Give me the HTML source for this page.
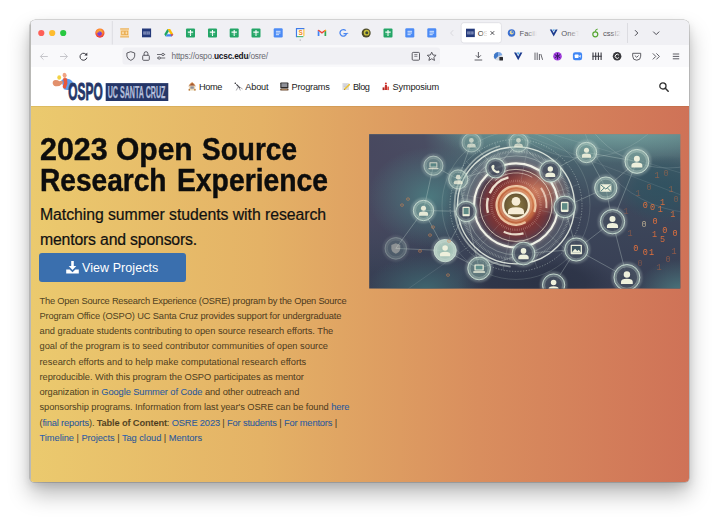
<!DOCTYPE html>
<html><head><meta charset="utf-8"><title>OSRE</title>
<style>
html,body{margin:0;padding:0;background:#fff;}
body{width:720px;height:523px;position:relative;overflow:hidden;font-family:"Liberation Sans",sans-serif;}
.abs,#o *{position:absolute;}
#win{position:absolute;left:30px;top:20px;width:659.4px;height:462.4px;border-radius:5.5px 5.5px 4px 4px;background:#f9f9fb;
 box-shadow:0 0 0 0.5px rgba(0,0,0,.28),0 12px 22px rgba(0,0,0,.28),0 4px 8px rgba(0,0,0,.10);overflow:hidden;}
#o{position:absolute;left:-30px;top:-20px;width:720px;height:523px;}
#tabbar{left:30px;top:20px;width:660px;height:25px;background:#f0f0f4;}
#navbar{left:30px;top:45px;width:660px;height:22px;background:#f9f9fb;border-bottom:1px solid #e0e0e3;}
#hdr{left:30px;top:67px;width:660px;height:39px;background:#fff;}
#hero{left:30px;top:106px;width:660px;height:377px;background:linear-gradient(90deg,#ebca6e 0%,#e4b266 35%,#d98e5e 68%,#cf7257 100%);}
.tl{top:30px;width:6px;height:6px;border-radius:50%;}
h1{margin:0;left:40px;font-size:31px;line-height:32px;font-weight:bold;color:#0d0d0d;white-space:nowrap;transform-origin:0 0;-webkit-text-stroke:0.45px #0d0d0d;}
.sub{-webkit-text-stroke:0.22px #111;left:40px;font-size:15.8px;line-height:18px;color:#111;white-space:nowrap;}
.btn{left:39px;top:253px;width:147px;height:29px;border-radius:3px;background:#3a6fae;color:#fff;font-size:12.5px;}
.pl{-webkit-text-stroke:0.12px rgba(28,22,10,.6);left:39.5px;font-size:9.3px;line-height:15px;color:rgba(28,22,10,.74);white-space:nowrap;}
#o .pl a,#o .pl b{position:static;}
.pl a{color:#2b62b0;text-decoration:none;}
.nav{top:81.8px;font-size:9.2px;line-height:11px;color:#222;white-space:nowrap;}
</style></head>
<body>
<div id="win"><div id="o">
 <div id="tabbar"></div>
 <div id="navbar"></div>

 <svg id="chrome" style="left:0;top:0" width="720" height="70" viewBox="0 0 720 70">
  <defs>
   <radialGradient id="ffg" cx="50%" cy="35%" r="65%"><stop offset="0" stop-color="#ffdf3f"/><stop offset=".45" stop-color="#ff8a2a"/><stop offset="1" stop-color="#e8273f"/></radialGradient>
   <linearGradient id="fadeA" x1="0" x2="1"><stop offset="0" stop-color="#fff" stop-opacity="0"/><stop offset="1" stop-color="#fff"/></linearGradient>
   <linearGradient id="fadeB" x1="0" x2="1"><stop offset="0" stop-color="#f0f0f4" stop-opacity="0"/><stop offset="1" stop-color="#f0f0f4"/></linearGradient>
  </defs>
  <!-- traffic lights -->
  <circle cx="41.3" cy="33" r="3.1" fill="#fe5f57"/><circle cx="52.2" cy="33" r="3.1" fill="#febc2e"/><circle cx="63.2" cy="33" r="3.1" fill="#28c840"/>
  <!-- firefox -->
  <circle cx="99.9" cy="33.1" r="4.6" fill="url(#ffg)"/><circle cx="99.6" cy="33.6" r="2.3" fill="#7b3fd6"/><path d="M96.2 31.2q2-2.2 4.6-.8q-1.800-.200-2.400 1q1.400.2 1.800 1.200q-2.400-.8-4 .8z" fill="#ff9a2e"/>
  <path d="M112.3 21V44.500" stroke="#dcdce1" stroke-width="1"/>
  <!-- orange table -->
  <g transform="translate(120.2,28.500)"><rect width="8.8" height="8.800" fill="#f8dcae"/><path d="M0 .4H8.8M0 8.400H8.800" stroke="#e9a542" stroke-width=".9"/><rect x="1.500" y="2.600" width="2.600" height="3.600" fill="none" stroke="#e9a542" stroke-width=".8"/><rect x="4.900" y="2.600" width="2.600" height="3.600" fill="none" stroke="#e9a542" stroke-width=".8"/></g>
  <!-- UC icon -->
  <g transform="translate(142,28.500)"><rect width="9.100" height="8.800" fill="#24397a"/><rect x="1.300" y="2.900" width="6.500" height="3.200" fill="#8d9bc4"/><path d="M3 2.900V6.100M4.600 2.900V6.100M6.200 2.900V6.100" stroke="#24397a" stroke-width=".5"/></g>
  <!-- drive -->
  <g transform="translate(164.300,28.900)"><path d="M3.100 0H5.900L9 5.300H6.200z" fill="#fbbc04"/><path d="M3.100 0L0 5.300L1.400 7.700L4.500 2.400z" fill="#1fa463"/><path d="M1.400 7.700H7.600L9 5.300H2.800z" fill="#4285f4"/><path d="M6.200 5.300H9L7.600 7.700z" fill="#ea4335"/></g>
  <g transform="translate(186.0,28.5)"><rect width="9" height="9" rx="1" fill="#23a566"/><path d="M4.5 1.6V7.6M1.8 3.6H7.2" stroke="#fff" stroke-width="1.1"/><path d="M1.8 5.6H7.2" stroke="#8fd3ae" stroke-width=".5"/></g><g transform="translate(208.0,28.5)"><rect width="9" height="9" rx="1" fill="#23a566"/><path d="M4.5 1.6V7.6M1.8 3.6H7.2" stroke="#fff" stroke-width="1.1"/><path d="M1.8 5.6H7.2" stroke="#8fd3ae" stroke-width=".5"/></g><g transform="translate(229.7,28.5)"><rect width="9" height="9" rx="1" fill="#23a566"/><path d="M4.5 1.6V7.6M1.8 3.6H7.2" stroke="#fff" stroke-width="1.1"/><path d="M1.8 5.6H7.2" stroke="#8fd3ae" stroke-width=".5"/></g><g transform="translate(251.5,28.5)"><rect width="9" height="9" rx="1" fill="#23a566"/><path d="M4.5 1.6V7.6M1.8 3.6H7.2" stroke="#fff" stroke-width="1.1"/><path d="M1.8 5.6H7.2" stroke="#8fd3ae" stroke-width=".5"/></g>
  <g transform="translate(273.7,28.3)"><rect width="9" height="9.2" rx="1.2" fill="#4c8bf5"/><path d="M2.2 3H6.8M2.2 4.7H6.8M2.2 6.4H5.4" stroke="#e8f0fe" stroke-width=".9"/></g>
  <!-- S calendar -->
  <g transform="translate(296,28.200)"><rect width="8.400" height="9" rx=".8" fill="#fff"/><path d="M.5 0V9" stroke="#3f7be8" stroke-width="1.200"/><path d="M0 .5H8.400" stroke="#3f7be8" stroke-width="1.200"/><path d="M7.900 1V8" stroke="#f6b91a" stroke-width="1"/><path d="M1 8.500H7.400" stroke="#2fa45a" stroke-width="1"/><text x="2.600" y="7.200" font-family="Liberation Sans, sans-serif" font-weight="bold" font-size="6.500" fill="#f08a24">S</text></g>
  <circle cx="300.200" cy="40" r=".6" fill="#8a8a92"/>
  <!-- gmail -->
  <g transform="translate(317.700,29.600)"><path d="M0 6.300V.9L1.700 2.200V6.300z" fill="#4285f4"/><path d="M8.500 6.300V.9L6.800 2.200V6.300z" fill="#34a853"/><path d="M0 .9Q.3-.3 1.500.4L4.250 2.500L7 .4Q8.200-.3 8.500.9L6.800 2.200L4.250 4.100L1.700 2.200z" fill="#ea4335"/><path d="M6.800 2.200L8.500.9Q8.300-.2 7 .4z" fill="#fbbc04"/></g>
  <!-- G -->
  <g transform="translate(339.500,29)"><path d="M6.300 1.700A3.300 3.300 0 1 0 7 4.600H4" fill="none" stroke="#4a86f0" stroke-width="1.300"/><circle cx="8.200" cy="4.300" r=".6" fill="#4a86f0"/></g>
  <!-- coin -->
  <circle cx="366.200" cy="33" r="4.500" fill="#4d4b2c"/><circle cx="366.600" cy="32.700" r="2.900" fill="#c9c13a"/><circle cx="366.800" cy="32.800" r="1.500" fill="#3c4a3a"/>
  <g transform="translate(383.5,28.5)"><rect width="9" height="9" rx="1" fill="#23a566"/><path d="M4.5 1.6V7.6M1.8 3.6H7.2" stroke="#fff" stroke-width="1.1"/><path d="M1.8 5.6H7.2" stroke="#8fd3ae" stroke-width=".5"/></g><g transform="translate(405.3,28.3)"><rect width="9" height="9.2" rx="1.2" fill="#4c8bf5"/><path d="M2.2 3H6.8M2.2 4.7H6.8M2.2 6.4H5.4" stroke="#e8f0fe" stroke-width=".9"/></g><g transform="translate(427.3,28.3)"><rect width="9" height="9.2" rx="1.2" fill="#4c8bf5"/><path d="M2.2 3H6.8M2.2 4.7H6.8M2.2 6.4H5.4" stroke="#e8f0fe" stroke-width=".9"/></g>
  <path d="M453.200 30.200L450.600 33L453.200 35.800" fill="none" stroke="#d9d9de" stroke-width="1"/>
  <!-- active tab -->
  <rect x="461.200" y="22.700" width="40.200" height="20.200" rx="2.600" fill="#fff" stroke="#d4d4da" stroke-width=".6"/>
  <g transform="translate(466,28.700)"><rect width="8.800" height="8.400" fill="#24397a"/><rect x="1.300" y="2.700" width="6.200" height="3" fill="#8d9bc4"/><path d="M2.900 2.700V5.700M4.400 2.700V5.700M5.900 2.700V5.700" stroke="#24397a" stroke-width=".5"/></g>
  <text x="477.800" y="35.700" font-family="Liberation Sans, sans-serif" font-size="7.600" fill="#1c1b22">OSRE</text>
  <rect x="480.500" y="28" width="6" height="10" fill="url(#fadeA)"/><rect x="486.400" y="28" width="14" height="10" fill="#fff"/>
  <path d="M490.600 31.200L494.200 34.800M494.200 31.200L490.600 34.800" stroke="#3a3a40" stroke-width=".9"/>
  <!-- Facil tab -->
  <circle cx="511.500" cy="33" r="3.800" fill="#3b6fd0"/><circle cx="511.700" cy="32.500" r="2" fill="#e9d79a"/><circle cx="512.400" cy="32.100" r="1.100" fill="#4b86e0"/>
  <text x="519.500" y="35.700" font-family="Liberation Sans, sans-serif" font-size="7.600" fill="#55555c">Facilit</text>
  <rect x="526" y="28" width="11" height="10" fill="url(#fadeB)"/><rect x="537" y="28" width="8" height="10" fill="#f0f0f4"/>
  <!-- OneTr tab -->
  <path d="M549.800 29.400L553.700 36.600L557.600 29.400H555.600L553.700 33L551.800 29.400z" fill="#1d3c8f"/><path d="M552.500 29.400L553.700 31.600L554.900 29.400z" fill="#3aa0e8"/>
  <text x="561.300" y="35.700" font-family="Liberation Sans, sans-serif" font-size="7.600" fill="#55555c">OneTru</text>
  <rect x="568" y="28" width="11" height="10" fill="url(#fadeB)"/><rect x="579" y="28" width="10" height="10" fill="#f0f0f4"/>
  <!-- cssI2 tab -->
  <circle cx="595.300" cy="34.300" r="2.500" fill="none" stroke="#55a630" stroke-width="1.200"/><path d="M595.300 31.800Q595.300 29.600 597.600 29" fill="none" stroke="#55a630" stroke-width="1.100"/>
  <text x="603" y="35.700" font-family="Liberation Sans, sans-serif" font-size="7.600" fill="#55555c">cssI20</text>
  <rect x="610" y="28" width="11" height="10" fill="url(#fadeB)"/><rect x="621" y="28" width="5" height="10" fill="#f0f0f4"/>
  <path d="M627.500 23V43" stroke="#dcdce1" stroke-width="1"/>
  <path d="M635 30.200L637.800 33L635 35.800" fill="none" stroke="#4a4a52" stroke-width="1"/>
  <path d="M653.200 31.600L656.200 34.600L659.200 31.600" fill="none" stroke="#4a4a52" stroke-width="1"/>
  <!-- nav toolbar -->
  <path d="M47.800 56.500H40.400M43.500 53.400L40.400 56.500L43.500 59.600" fill="none" stroke="#c6c6cb" stroke-width="1"/>
  <path d="M60 56.500H67.400M64.300 53.400L67.400 56.500L64.300 59.600" fill="none" stroke="#c6c6cb" stroke-width="1"/>
  <path d="M86.700 55.300A3.500 3.500 0 1 0 86.900 57.600" fill="none" stroke="#3a3a42" stroke-width="1"/><path d="M87.300 52.600V55.600H84.300z" fill="#3a3a42"/>
  <rect x="122.500" y="47.600" width="317.500" height="16.800" rx="2.500" fill="#f0f0f4"/>
  <path d="M130.800 51.700L134.700 53V56.200Q134.500 59 130.800 60.400Q127.100 59 126.900 56.200V53z" fill="none" stroke="#4c4c54" stroke-width=".9" stroke-linejoin="round"/>
  <rect x="142.700" y="55.300" width="6.600" height="5" rx=".9" fill="none" stroke="#4c4c54" stroke-width=".9"/><path d="M144.100 55.300V53.600A1.900 1.900 0 0 1 147.900 53.600V55.300" fill="none" stroke="#4c4c54" stroke-width=".9"/>
  <path d="M157 54.500H165.200M157 58H165.200" stroke="#4c4c54" stroke-width=".8"/><circle cx="163" cy="54.500" r="1.200" fill="#f0f0f4" stroke="#4c4c54" stroke-width=".8"/><circle cx="159.200" cy="58" r="1.200" fill="#f0f0f4" stroke="#4c4c54" stroke-width=".8"/>
  <text id="url" x="171.500" y="59.300" font-family="Liberation Sans, sans-serif" font-size="8.300" fill="#6a6a72" textLength="96.500" lengthAdjust="spacing">https://ospo.<tspan fill="#15141a" font-weight="bold">ucsc.edu</tspan>/osre/</text>
  <rect x="412.200" y="52.400" width="7.300" height="7.800" rx="1" fill="none" stroke="#4c4c54" stroke-width=".9"/><path d="M414.300 54.600H417.400M414.300 56.300H417.400" stroke="#4c4c54" stroke-width=".7"/>
  <path d="M431.700 52.200L433 55L436.100 55.300L433.800 57.400L434.500 60.400L431.700 58.800L428.900 60.400L429.600 57.400L427.300 55.300L430.400 55z" fill="none" stroke="#4c4c54" stroke-width=".9" stroke-linejoin="round"/>
  <path d="M478.400 52V57.600M475.900 55.300L478.400 57.800L480.900 55.300M474.600 60H482.200" fill="none" stroke="#4c4c54" stroke-width=".9"/>
  <circle cx="498.200" cy="56.300" r="4.300" fill="#d7dbe2"/><path d="M498.200 52A4.300 4.300 0 0 0 495 59.300L498.200 56.300z" fill="#3f78c8"/><path d="M498.200 52A4.300 4.300 0 0 1 502.300 55L498.200 56.300z" fill="#7aa7e6"/><rect x="499.400" y="57" width="3.600" height="3.400" rx=".5" fill="#2b2b30"/>
  <path d="M514 52.600L518.200 60.200L522.400 52.600H520.200L518.200 56.400L516.200 52.600z" fill="#1d3c8f"/><path d="M516.900 52.600L518.200 55L519.500 52.600z" fill="#3aa0e8"/>
  <path d="M535 52.600V60M537.200 52.600V60M539.400 54V60M540.800 54L542.600 59.800" stroke="#55555c" stroke-width=".9" fill="none"/>
  <circle cx="557.500" cy="56.200" r="4.300" fill="#a43fe0"/><path d="M557.500 53V59.400M554.700 54.600L560.300 57.800M560.300 54.600L554.700 57.800" stroke="#3a1a6a" stroke-width="1"/>
  <rect x="572.900" y="52.300" width="9.200" height="8" rx="2.200" fill="#3f86f5"/><rect x="574.700" y="54.600" width="3.900" height="3.300" rx=".7" fill="#fff"/><path d="M578.900 56.200L580.600 54.800V57.700z" fill="#fff"/>
  <path d="M593 52.600V60M595.700 52.600V60M598.400 52.600V60M601.100 52.600V60M592.200 56.300H601.900" stroke="#3a3a42" stroke-width="1.100"/>
  <circle cx="617.100" cy="56.300" r="4.300" fill="#38383c"/><path d="M618.800 55.100A2 2 0 1 0 618.800 57.500" fill="none" stroke="#fff" stroke-width="1"/>
  <path d="M632.700 53.300H640.700V56.200A4 4 0 0 1 632.700 56.200z" fill="none" stroke="#4c4c54" stroke-width=".9" stroke-linejoin="round"/><path d="M634.800 55.500L636.700 57.300L638.600 55.500" fill="none" stroke="#4c4c54" stroke-width=".9"/>
  <path d="M652.800 53.400L655.800 56.400L652.800 59.400M656.400 53.400L659.400 56.400L656.400 59.400" fill="none" stroke="#4c4c54" stroke-width=".9"/>
  <path d="M672.800 54H679.200M672.800 56.400H679.200M672.800 58.800H679.200" stroke="#4c4c54" stroke-width=".9"/>
 </svg>
 <div id="hdr"></div>
   <svg id="logo" style="left:48px;top:70px" width="126" height="36" viewBox="48 70 126 36">
    <path d="M61.400 80.200Q63.500 78.400 67.500 78.800Q71.700 79.400 72.900 83Q73.600 87 70.800 89.300Q67.500 90.600 63.800 89.200z" fill="#5b9bef"/>
    <path d="M52.700 83.400Q52.400 80.200 55.600 79.900Q58 79.900 59.400 81.200L61.800 80.800Q63.600 81.600 62.600 83.600Q60.400 86.300 56.800 86.300Q53.400 86.200 52.700 83.400z" fill="#e2906c"/>
    <ellipse cx="59.200" cy="77.500" rx="1.900" ry="2.200" fill="#f3d243"/>
    <path d="M62.600 75.600Q62.400 72.900 64.300 72.700Q66.500 72.800 66.700 75.400Q66.400 77.400 64.800 78.200Q63 78 62.600 75.600z" fill="#efa383"/>
    <path d="M63 78.600Q65 77.600 67 78.600L67.400 83.600L65.600 88.800Q63.400 88.800 62.600 87L63.900 83z" fill="#e8563b"/>
    <text x="68.300" y="100.200" font-family="Liberation Sans, sans-serif" font-weight="bold" font-size="23" textLength="34.400" lengthAdjust="spacingAndGlyphs" fill="#253668" stroke="#253668" stroke-width="0.900" stroke-linejoin="round">OSPO</text>
    <rect x="105.700" y="83.100" width="62.600" height="17.900" fill="#253668"/>
    <text x="107.700" y="98" font-family="Liberation Sans, sans-serif" font-weight="bold" font-size="16.600" textLength="57.700" lengthAdjust="spacingAndGlyphs" fill="#b4bedb" stroke="#b4bedb" stroke-width="0.250">UC SANTA CRUZ</text>
   </svg>
   <svg id="emo" style="left:180px;top:78px" width="220" height="18" viewBox="180 78 220 18">
    <!-- house -->
    <path d="M188.300 86.200L192.100 82.500L195.900 86.200z" fill="#a4572f"/><rect x="189.100" y="85.600" width="6" height="4.900" fill="#ead9b8"/><rect x="190.400" y="86.400" width="3.400" height="2.300" fill="#8c8f9c"/><rect x="188.600" y="88.900" width="1.300" height="1.700" fill="#b5702f"/><rect x="194.300" y="88.900" width="1.300" height="1.700" fill="#b5702f"/><path d="M189.400 84.600L192.100 82.600L194.800 84.600" stroke="#d98a3a" stroke-width=".7" fill="none"/>
    <!-- telescope -->
    <circle cx="235.300" cy="83.300" r=".8" fill="#2b2b30"/><path d="M236.400 84.400L240.200 88.200" stroke="#3a3a40" stroke-width="1.100"/><path d="M238.300 86.600L236.200 90.500M238.500 86.600L240.400 90.500M240.400 87.600L242.600 89" stroke="#6c6c74" stroke-width=".6" fill="none"/>
    <!-- computer -->
    <rect x="280.300" y="82.500" width="8.100" height="6" rx=".8" fill="#2c2a2a"/><rect x="281.400" y="83.300" width="5.900" height="3.700" fill="#8e9098"/><rect x="280.200" y="88.700" width="8.300" height="1.700" rx=".4" fill="#6b4a32"/><rect x="281.500" y="89" width="5.700" height=".7" fill="#c49a6a"/>
    <!-- memo -->
    <rect x="342.400" y="83" width="6.600" height="7.100" rx=".6" fill="#dcdde3"/><path d="M343.500 85H347M343.500 86.500H346" stroke="#b9bbc6" stroke-width=".5"/><path d="M344.600 89.300L349.300 84.600" stroke="#e9c23c" stroke-width="1.500" stroke-linecap="round"/><path d="M343.900 90L344.900 89.600L344.300 89z" fill="#6b4a32"/>
    <!-- symposium figure -->
    <circle cx="385.900" cy="83.400" r="1" fill="#d2362f"/><path d="M385 85H386.900L387.400 90H384.400z" fill="#c72f2a"/><rect x="382.600" y="87.400" width="1.700" height="2.700" fill="#a8241f"/><rect x="387.400" y="86.600" width="1.600" height="3.500" fill="#e0584a"/>
   </svg>
   <span class="nav" id="n1" style="left:199.00px;letter-spacing:-0.379px">Home</span>
   <span class="nav" id="n2" style="left:245.30px;letter-spacing:-0.203px">About</span>
   <span class="nav" id="n3" style="left:291.50px;letter-spacing:-0.216px">Programs</span>
   <span class="nav" id="n4" style="left:352.90px;letter-spacing:-0.448px">Blog</span>
   <span class="nav" id="n5" style="left:392.60px;letter-spacing:-0.189px">Symposium</span>
   <svg id="srch" style="left:658px;top:81px" width="12" height="12" viewBox="0 0 12 12"><circle cx="4.9" cy="4.9" r="3.1" fill="none" stroke="#303030" stroke-width="1.3"/><path d="M7.300 7.300L10.200 10.200" stroke="#303030" stroke-width="1.500" stroke-linecap="round"/></svg>
 <div id="hero"></div>
 <div id="hl" style="left:30px;top:106px;width:660px;height:1px;background:rgba(120,90,0,.12)"></div>
 <div id="lb" style="left:30px;top:20px;width:.9px;height:463px;background:#b9b9b6"></div>
   <h1 id="w1" style="top:133.5px;left:40.20px;transform:scaleX(0.9816)">2023</h1><h1 id="w2" style="top:133.5px;left:116.00px;transform:scaleX(0.9680)">Open</h1><h1 id="w3" style="top:133.5px;left:201.70px;transform:scaleX(0.9038)">Source</h1>
   <h1 id="w4" style="top:164.8px;left:40.20px;transform:scaleX(0.9062)">Research</h1><h1 id="w5" style="top:164.8px;left:177.30px;transform:scaleX(0.9127)">Experience</h1>
   <div class="sub" id="s1" style="top:205.9px;left:40.00px;letter-spacing:-0.052px">Matching summer students with research</div>
   <div class="sub" id="s2" style="top:230.5px;left:40.00px;letter-spacing:-0.176px">mentors and sponsors.</div>
   <div class="btn"></div>
   <span id="vp" style="top:260.7px;white-space:nowrap;color:#fff;font-size:12.5px;line-height:14px;left:82.00px;letter-spacing:0.062px">View Projects</span>
   <svg id="dl" style="left:65px;top:260px" width="15" height="15" viewBox="0 0 15 15"><path d="M6.200 1H8.800V6H11.300L7.500 9.900L3.700 6H6.200z" fill="#fff"/><path d="M1.200 9.600H4.600L7.500 12.300L10.400 9.600H13.800V13.600H1.200z" fill="#fff"/></svg>
   <div class="pl" id="pl0" style="top:293.50px;left:39.50px;letter-spacing:-0.224px">The Open Source Research Experience (OSRE) program by the Open Source</div>
   <div class="pl" id="pl1" style="top:308.75px;left:39.50px;letter-spacing:-0.131px">Program Office (OSPO) UC Santa Cruz provides support for undergraduate</div>
   <div class="pl" id="pl2" style="top:324.00px;left:39.50px;letter-spacing:-0.022px">and graduate students contributing to open source research efforts. The</div>
   <div class="pl" id="pl3" style="top:339.25px;left:39.50px;letter-spacing:0.002px">goal of the program is to seed contributor communities of open source</div>
   <div class="pl" id="pl4" style="top:354.50px;left:39.50px;letter-spacing:0.015px">research efforts and to help make computational research efforts</div>
   <div class="pl" id="pl5" style="top:369.75px;left:39.50px;letter-spacing:-0.062px">reproducible. With this program the OSPO participates as mentor</div>
   <div class="pl" id="pl6" style="top:385.00px;left:39.50px;letter-spacing:-0.082px">organization in <a>Google Summer of Code</a> and other outreach and</div>
   <div class="pl" id="pl7" style="top:400.25px;left:39.50px;letter-spacing:-0.075px">sponsorship programs. Information from last year's OSRE can be found <a>here</a></div>
   <div class="pl" id="pl8" style="top:415.50px;left:39.50px;letter-spacing:-0.159px">(<a>final reports</a>). <b>Table of Content</b>: <a>OSRE 2023</a> | <a>For students</a> | <a>For mentors</a> |</div>
   <div class="pl" id="pl9" style="top:430.75px;left:39.50px;letter-spacing:-0.046px"><a>Timeline</a> | <a>Projects</a> | <a>Tag cloud</a> | <a>Mentors</a></div>
   <svg id="heroimg" style="left:368.3px;top:133.4px" width="313.5" height="156.6" viewBox="0 0 313.5 156.6">
<defs>
<linearGradient id="bg0" x1="0" y1="0" x2="0" y2="1"><stop offset="0" stop-color="#5c8084"/><stop offset=".2" stop-color="#48606c"/><stop offset=".48" stop-color="#3d475b"/><stop offset="1" stop-color="#373e53"/></linearGradient>
<radialGradient id="gTeal2"><stop offset="0" stop-color="#3f6a72"/><stop offset="1" stop-color="#3f6a72" stop-opacity="0"/></radialGradient>
<radialGradient id="gTL"><stop offset="0" stop-color="#48485f"/><stop offset=".55" stop-color="#48485f" stop-opacity=".9"/><stop offset="1" stop-color="#48485f" stop-opacity="0"/></radialGradient>
<radialGradient id="gBL"><stop offset="0" stop-color="#464560"/><stop offset="1" stop-color="#464560" stop-opacity="0"/></radialGradient>
<radialGradient id="gTeal"><stop offset="0" stop-color="#4c7b80"/><stop offset="1" stop-color="#4c7b80" stop-opacity="0"/></radialGradient>
<radialGradient id="gTR"><stop offset="0" stop-color="#78a5a2"/><stop offset="1" stop-color="#78a5a2" stop-opacity="0"/></radialGradient>
<radialGradient id="gDark"><stop offset="0" stop-color="#2c3346"/><stop offset=".6" stop-color="#2c3346" stop-opacity=".8"/><stop offset="1" stop-color="#2c3346" stop-opacity="0"/></radialGradient>
<radialGradient id="gDT"><stop offset="0" stop-color="#2e5260" stop-opacity=".85"/><stop offset=".6" stop-color="#2e5260" stop-opacity=".6"/><stop offset="1" stop-color="#2e5260" stop-opacity="0"/></radialGradient>
<radialGradient id="gSlate"><stop offset="0" stop-color="#394058"/><stop offset=".6" stop-color="#394058" stop-opacity=".85"/><stop offset="1" stop-color="#394058" stop-opacity="0"/></radialGradient>
<radialGradient id="gRed"><stop offset="0" stop-color="#b24c3a"/><stop offset=".3" stop-color="#9c3e34"/><stop offset=".5" stop-color="#7e3434"/><stop offset=".64" stop-color="#70363c" stop-opacity=".92"/><stop offset=".78" stop-color="#5a3e4c" stop-opacity=".55"/><stop offset="1" stop-color="#4a4052" stop-opacity="0"/></radialGradient>
<radialGradient id="gRing"><stop offset="0" stop-color="#3a4052" stop-opacity=".75"/><stop offset=".7" stop-color="#3a4052" stop-opacity=".6"/><stop offset="1" stop-color="#3a4052" stop-opacity="0"/></radialGradient>
<radialGradient id="gCore"><stop offset="0" stop-color="#8c7c44"/><stop offset=".8" stop-color="#6e5c36"/><stop offset="1" stop-color="#5a4830"/></radialGradient>
<radialGradient id="gNode"><stop offset="0" stop-color="#7fa8a0" stop-opacity=".55"/><stop offset=".7" stop-color="#8cb3a8" stop-opacity=".5"/><stop offset="1" stop-color="#c4dccf" stop-opacity=".65"/></radialGradient>
<radialGradient id="gNodeB"><stop offset="0" stop-color="#9cc4b4" stop-opacity=".9"/><stop offset="1" stop-color="#cfe6d8" stop-opacity=".85"/></radialGradient>
<radialGradient id="gNodeD"><stop offset="0" stop-color="#3c4456" stop-opacity=".9"/><stop offset=".75" stop-color="#485262" stop-opacity=".85"/><stop offset="1" stop-color="#9fb4b0" stop-opacity=".8"/></radialGradient>
<radialGradient id="gHaze"><stop offset="0" stop-color="#dc8c68" stop-opacity=".85"/><stop offset=".5" stop-color="#cc7c62" stop-opacity=".5"/><stop offset="1" stop-color="#c07060" stop-opacity="0"/></radialGradient>
<filter id="b1" x="-30%" y="-30%" width="160%" height="160%"><feGaussianBlur stdDeviation="1.100"/></filter>
<filter id="b2" x="-30%" y="-30%" width="160%" height="160%"><feGaussianBlur stdDeviation="2.500"/></filter>
<filter id="b03"><feGaussianBlur stdDeviation=".3"/></filter>
<filter id="b05"><feGaussianBlur stdDeviation=".45"/></filter>
<clipPath id="clipimg"><rect x="1.200" y="1.200" width="311.100" height="154.400"/></clipPath>
<g id="ip"><circle cx="0" cy="-2.400" r="2.300"/><path d="M-4.200 4.400V2.800Q-4.200 .6 0 .6Q4.200 .6 4.200 2.800V4.400z"/></g>
</defs>
<g clip-path="url(#clipimg)">
<rect width="313.5" height="156.6" fill="url(#bg0)"/>
<ellipse cx="0" cy="20" rx="105" ry="120" fill="url(#gTL)"/>
<ellipse cx="62" cy="64" rx="62" ry="50" fill="url(#gTeal)" opacity=".95"/>
<ellipse cx="255" cy="-6" rx="120" ry="36" fill="url(#gTR)" opacity=".85"/>
<ellipse cx="150" cy="-6" rx="90" ry="30" fill="url(#gTR)" opacity=".45"/>
<ellipse cx="58" cy="156" rx="60" ry="34" fill="url(#gTeal2)" opacity=".9"/>
<ellipse cx="313" cy="160" rx="46" ry="34" fill="url(#gTeal)" opacity=".95"/>
<ellipse cx="296" cy="56" rx="46" ry="34" fill="url(#gDT)"/>
<ellipse cx="170" cy="150" rx="80" ry="30" fill="url(#gDark)"/>
<ellipse cx="148.0" cy="78.4" rx="72" ry="70" fill="url(#gRing)"/>
<circle cx="148.0" cy="72.4" r="50" fill="url(#gRed)"/>
<ellipse cx="168.0" cy="58.400000000000006" rx="34" ry="26" fill="url(#gHaze)"/>
<g fill="none" stroke="#e6f0ea" opacity=".28"><circle cx="300" cy="-60" r="95" stroke-width=".6"/><circle cx="330" cy="-40" r="120" stroke-width=".5"/><circle cx="215" cy="-75" r="100" stroke-width=".5"/><path d="M150 0L313 62M180 0L313 40M40 156L120 100" stroke-width=".4"/></g>
<g stroke="#d5e6dc" stroke-width=".55" opacity=".55" fill="none">
<path d="M103.4 9.6L127.5 35.2"/>
<path d="M150.5 9.6L127.5 35.2"/>
<path d="M150.5 9.6L182.3 38.4"/>
<path d="M218.5 19.5L182.3 38.4"/>
<path d="M218.5 19.5L237.8 55.1"/>
<path d="M268.9 28.4L237.8 55.1"/>
<path d="M268.9 28.4L218.5 19.5"/>
<path d="M65.4 32.7L90.2 46.4"/>
<path d="M90.2 46.4L127.5 35.2"/>
<path d="M90.2 46.4L98.1 78.5"/>
<path d="M65.4 32.7L55.5 77.5"/>
<path d="M55.5 77.5L98.1 78.5"/>
<path d="M55.5 77.5L27.8 115.4"/>
<path d="M55.5 77.5L77.1 117.6"/>
<path d="M27.8 115.4L77.1 117.6"/>
<path d="M77.1 117.6L98.1 78.5"/>
<path d="M77.1 117.6L111.1 135.4"/>
<path d="M111.1 135.4L155.5 120.5"/>
<path d="M155.5 120.5L208.3 116.5"/>
<path d="M208.3 116.5L244.5 88.7"/>
<path d="M244.5 88.7L237.8 55.1"/>
<path d="M244.5 88.7L258.9 144.5"/>
<path d="M208.3 116.5L258.9 144.5"/>
<path d="M208.3 116.5L185.6 152.1"/>
<path d="M182.3 38.4L196.7 73.9"/>
<path d="M196.7 73.9L208.3 116.5"/>
<path d="M237.8 55.1L196.7 73.9"/>
<path d="M103.4 9.6L90.2 46.4"/>
<path d="M268.9 28.4L244.5 88.7"/>
<path d="M98.1 78.5L111.1 135.4"/>
<path d="M173.5 77.6L212.7 85.5" opacity=".5"/>
<path d="M167.5 89.6L197.5 116.1" opacity=".5"/>
<path d="M156.3 97.1L169.0 135.0" opacity=".5"/>
<path d="M142.8 97.9L134.9 137.1" opacity=".5"/>
<path d="M130.8 91.9L104.3 121.9" opacity=".5"/>
<path d="M123.3 80.7L85.4 93.4" opacity=".5"/>
<path d="M122.5 67.2L83.3 59.3" opacity=".5"/>
<path d="M128.5 55.2L98.5 28.7" opacity=".5"/>
<path d="M139.7 47.7L127.0 9.8" opacity=".5"/>
<path d="M153.2 46.9L161.1 7.7" opacity=".5"/>
<path d="M165.2 52.9L191.7 22.9" opacity=".5"/>
<path d="M172.7 64.1L210.6 51.4" opacity=".5"/>
</g>
<g fill="none" stroke-linecap="butt">
<circle cx="148.0" cy="72.4" r="50" stroke="#e8efe8" stroke-width="15" opacity=".13" filter="url(#b2)"/>
<path d="M104.70 97.40A50 50 0 0 1 191.30 47.40" stroke="#e8efe8" stroke-width="13" opacity=".1" filter="url(#b2)"/>
<circle cx="148.0" cy="72.4" r="74" stroke="#cfe2d8" stroke-width=".5" opacity=".35"/>
<circle cx="148.0" cy="72.4" r="66" stroke="#dbe9df" stroke-width=".7" stroke-dasharray="1.200 1.600" opacity=".6"/>
<circle cx="148.0" cy="72.4" r="58.500" stroke="#eef4ea" stroke-width="1.400" opacity=".85"/>
<path d="M142.64 133.67A61.5 61.5 0 0 1 132.08 13.00" stroke="#e8f1e6" stroke-width="1.800" opacity=".5" filter="url(#b05)"/>
<circle cx="148.0" cy="72.4" r="54" stroke="#dde9e0" stroke-width="2.400" stroke-dasharray=".5 1.100" opacity=".45"/>
<circle cx="148.0" cy="72.4" r="49.500" stroke="#e3ece2" stroke-width=".6" opacity=".55"/>
<circle cx="148.0" cy="72.4" r="42" stroke="#f6f6ec" stroke-width="2.100" opacity=".97"/>
<circle cx="148.0" cy="72.4" r="42" stroke="#f0f2e4" stroke-width="4" opacity=".3" filter="url(#b1)"/>
<circle cx="148.0" cy="72.4" r="36" stroke="#f3e7d3" stroke-width=".9" opacity=".8"/>
<path d="M121.72 60.14A29 29 0 0 1 140.49 44.39" stroke="#f4ead8" stroke-width="2.400" opacity=".95"/>
<path d="M119.99 79.91A29 29 0 0 1 119.99 64.89" stroke="#f4ead8" stroke-width="2.400" opacity=".9"/>
<path d="M155.51 100.41A29 29 0 0 1 135.74 98.68" stroke="#f4ead8" stroke-width="2.200" opacity=".9"/>
<path d="M172.98 54.91A30.5 30.5 0 0 1 178.38 75.06" stroke="#f0d8c6" stroke-width="2" opacity=".8"/>
<path d="M127.11 47.50A32.5 32.5 0 0 1 164.25 44.25" stroke="#f0e0d0" stroke-width=".8" opacity=".7"/>
<circle cx="148.0" cy="72.4" r="24.500" stroke="#f2dccb" stroke-width="2.400" stroke-dasharray=".5 1.400" opacity=".45"/>
<path d="M157.65 89.11A19.3 19.3 0 1 1 166.14 79.00" stroke="#f6ecd9" stroke-width="2.300" opacity=".95"/>
<circle cx="148.0" cy="72.4" r="16" stroke="#f5e3cf" stroke-width=".5" opacity=".6"/>
</g>
<circle cx="148.0" cy="72.4" r="17" fill="none" stroke="#e48a4c" stroke-width="6" opacity=".55" filter="url(#b1)"/>
<circle cx="148.0" cy="72.4" r="15" fill="#f3e6c8" opacity=".5" filter="url(#b1)"/>
<circle cx="148.0" cy="72.4" r="12.900" fill="url(#gCore)" stroke="#f5ecd2" stroke-width="2.200"/>
<use href="#ip" transform="translate(148.0,73.0) scale(1.900)" fill="#f6edd6"/>
<g opacity="0.72">
<circle cx="103.4" cy="9.6" r="10.4" fill="none" stroke="#d8eadf" stroke-width="2.400" opacity=".32" filter="url(#b1)"/>
<circle cx="103.4" cy="9.6" r="9.4" fill="url(#gNode)" stroke="#cfe2d6" stroke-width="1" stroke-opacity=".85"/>
<circle cx="103.4" cy="9.6" r="7.1" fill="none" stroke="#e3efe2" stroke-width=".4" opacity=".6"/>
<use href="#ip" transform="translate(103.4,9.90456) scale(1.02)" fill="#eef0dc"/>
</g>
<g opacity="0.72">
<circle cx="150.5" cy="9.6" r="10.4" fill="none" stroke="#d8eadf" stroke-width="2.400" opacity=".32" filter="url(#b1)"/>
<circle cx="150.5" cy="9.6" r="9.4" fill="url(#gNode)" stroke="#cfe2d6" stroke-width="1" stroke-opacity=".85"/>
<circle cx="150.5" cy="9.6" r="7.1" fill="none" stroke="#e3efe2" stroke-width=".4" opacity=".6"/>
<use href="#ip" transform="translate(150.5,9.90456) scale(1.02)" fill="#eef0dc"/>
</g>
<g opacity="0.95">
<circle cx="218.5" cy="19.5" r="11.2" fill="none" stroke="#d8eadf" stroke-width="2.400" opacity=".32" filter="url(#b1)"/>
<circle cx="218.5" cy="19.5" r="10.2" fill="url(#gNode)" stroke="#cfe2d6" stroke-width="1" stroke-opacity=".85"/>
<circle cx="218.5" cy="19.5" r="7.9" fill="none" stroke="#e3efe2" stroke-width=".4" opacity=".6"/>
<use href="#ip" transform="translate(218.5,19.83048) scale(1.10)" fill="#eef0dc"/>
</g>
<g opacity="1">
<circle cx="268.9" cy="28.4" r="13.0" fill="none" stroke="#d8eadf" stroke-width="2.400" opacity=".32" filter="url(#b1)"/>
<circle cx="268.9" cy="28.4" r="12.0" fill="url(#gNode)" stroke="#cfe2d6" stroke-width="1" stroke-opacity=".85"/>
<circle cx="268.9" cy="28.4" r="9.7" fill="none" stroke="#e3efe2" stroke-width=".4" opacity=".6"/>
<use href="#ip" transform="translate(268.9,28.7888) scale(1.30)" fill="#eef0dc"/>
</g>
<g opacity="0.8">
<circle cx="65.4" cy="32.7" r="10.6" fill="none" stroke="#d8eadf" stroke-width="2.400" opacity=".32" filter="url(#b1)"/>
<circle cx="65.4" cy="32.7" r="9.6" fill="url(#gNode)" stroke="#cfe2d6" stroke-width="1" stroke-opacity=".85"/>
<circle cx="65.4" cy="32.7" r="7.3" fill="none" stroke="#e3efe2" stroke-width=".4" opacity=".6"/>
<g transform="translate(65.4,32.7) scale(1.04)" fill="#eef0dc" stroke="none"><rect x="-3.800" y="-3.200" width="7.600" height="5" rx=".5"/><rect x="-4.800" y="2.300" width="9.600" height="1.200" rx=".4"/><rect x="-2.800" y="-2.300" width="5.600" height="3.200" fill="#5f8f8b"/></g>
</g>
<g opacity="0.85">
<circle cx="90.2" cy="46.4" r="10.6" fill="none" stroke="#d8eadf" stroke-width="2.400" opacity=".32" filter="url(#b1)"/>
<circle cx="90.2" cy="46.4" r="9.6" fill="url(#gNode)" stroke="#cfe2d6" stroke-width="1" stroke-opacity=".85"/>
<circle cx="90.2" cy="46.4" r="7.3" fill="none" stroke="#e3efe2" stroke-width=".4" opacity=".6"/>
<use href="#ip" transform="translate(90.2,46.71104) scale(1.04)" fill="#eef0dc"/>
</g>
<g opacity="1">
<circle cx="127.5" cy="35.2" r="10.8" fill="none" stroke="#d8eadf" stroke-width="2.400" opacity=".32" filter="url(#b1)"/>
<circle cx="127.5" cy="35.2" r="9.8" fill="url(#gNodeD)" stroke="#cfe2d6" stroke-width="1" stroke-opacity=".85"/>
<circle cx="127.5" cy="35.2" r="7.5" fill="none" stroke="#e3efe2" stroke-width=".4" opacity=".6"/>
<g transform="translate(127.5,35.2) scale(1.06)" fill="#eef0dc" stroke="none"><path d="M-3.300-2.600Q-2.200-3.900-1.100-2.700L-.9-1Q-1.600-.3-1.300.5Q-.2 2.300 1.500 2.600Q2.300 1.700 3.200 2.300L4 3.600Q3.200 5 1.300 4.700Q-3.300 3.200-4-1.200Q-4.100-2-3.300-2.600z"/></g>
</g>
<g opacity="1">
<circle cx="182.3" cy="38.4" r="11.8" fill="none" stroke="#d8eadf" stroke-width="2.400" opacity=".32" filter="url(#b1)"/>
<circle cx="182.3" cy="38.4" r="10.8" fill="url(#gNodeD)" stroke="#cfe2d6" stroke-width="1" stroke-opacity=".85"/>
<circle cx="182.3" cy="38.4" r="8.5" fill="none" stroke="#e3efe2" stroke-width=".4" opacity=".6"/>
<use href="#ip" transform="translate(182.3,38.749919999999996) scale(1.17)" fill="#eef0dc"/>
</g>
<g opacity="1">
<circle cx="237.8" cy="55.1" r="12.2" fill="none" stroke="#d8eadf" stroke-width="2.400" opacity=".32" filter="url(#b1)"/>
<circle cx="237.8" cy="55.1" r="11.2" fill="url(#gNode)" stroke="#cfe2d6" stroke-width="1" stroke-opacity=".85"/>
<circle cx="237.8" cy="55.1" r="8.9" fill="none" stroke="#e3efe2" stroke-width=".4" opacity=".6"/>
<g transform="translate(237.8,55.1) scale(1.21)" fill="#eef0dc" stroke="none"><rect x="-4.600" y="-3.100" width="9.200" height="6.200" rx=".5"/><path d="M-4.200-2.700L0 .8L4.200-2.700M-4.200 2.700L-1.200-.2M4.200 2.700L1.200-.2" stroke="#4f7f80" stroke-width=".8" fill="none"/></g>
</g>
<g opacity="0.95">
<circle cx="55.5" cy="77.5" r="11.2" fill="none" stroke="#d8eadf" stroke-width="2.400" opacity=".32" filter="url(#b1)"/>
<circle cx="55.5" cy="77.5" r="10.2" fill="url(#gNode)" stroke="#cfe2d6" stroke-width="1" stroke-opacity=".85"/>
<circle cx="55.5" cy="77.5" r="7.9" fill="none" stroke="#e3efe2" stroke-width=".4" opacity=".6"/>
<use href="#ip" transform="translate(55.5,77.83048) scale(1.10)" fill="#eef0dc"/>
</g>
<g opacity="1">
<circle cx="98.1" cy="78.5" r="11.2" fill="none" stroke="#d8eadf" stroke-width="2.400" opacity=".32" filter="url(#b1)"/>
<circle cx="98.1" cy="78.5" r="10.2" fill="url(#gNodeD)" stroke="#cfe2d6" stroke-width="1" stroke-opacity=".85"/>
<circle cx="98.1" cy="78.5" r="7.9" fill="none" stroke="#e3efe2" stroke-width=".4" opacity=".6"/>
<g transform="translate(98.1,78.5) scale(1.10)" fill="#eef0dc" stroke="none"><rect x="-3.300" y="-4.300" width="6.600" height="8.600" rx=".9"/><rect x="-2.300" y="-3.200" width="4.600" height="5.600" fill="#5f8b86"/></g>
</g>
<g opacity="1">
<circle cx="196.7" cy="73.9" r="11.8" fill="none" stroke="#d8eadf" stroke-width="2.400" opacity=".32" filter="url(#b1)"/>
<circle cx="196.7" cy="73.9" r="10.8" fill="url(#gNodeD)" stroke="#cfe2d6" stroke-width="1" stroke-opacity=".85"/>
<circle cx="196.7" cy="73.9" r="8.5" fill="none" stroke="#e3efe2" stroke-width=".4" opacity=".6"/>
<g transform="translate(196.7,73.9) scale(1.17)" fill="#eef0dc" stroke="none"><rect x="-3.300" y="-4.300" width="6.600" height="8.600" rx=".9"/><rect x="-2.300" y="-3.200" width="4.600" height="5.600" fill="#5f8b86"/></g>
</g>
<g opacity="1">
<circle cx="244.5" cy="88.7" r="13.2" fill="none" stroke="#d8eadf" stroke-width="2.400" opacity=".32" filter="url(#b1)"/>
<circle cx="244.5" cy="88.7" r="12.2" fill="url(#gNodeD)" stroke="#cfe2d6" stroke-width="1" stroke-opacity=".85"/>
<circle cx="244.5" cy="88.7" r="9.9" fill="none" stroke="#e3efe2" stroke-width=".4" opacity=".6"/>
<use href="#ip" transform="translate(244.5,89.09528) scale(1.32)" fill="#eef0dc"/>
</g>
<g opacity="0.45">
<circle cx="27.8" cy="115.4" r="11.8" fill="none" stroke="#d8eadf" stroke-width="2.400" opacity=".32" filter="url(#b1)"/>
<circle cx="27.8" cy="115.4" r="10.8" fill="url(#gNode)" stroke="#cfe2d6" stroke-width="1" stroke-opacity=".85"/>
<circle cx="27.8" cy="115.4" r="8.5" fill="none" stroke="#e3efe2" stroke-width=".4" opacity=".6"/>
<g transform="translate(27.8,115.4) scale(1.17)" fill="#eef0dc" stroke="none"><path d="M0-4.300L3.800-2.800V.4Q3.600 3.300 0 4.600Q-3.600 3.300-3.800 .4V-2.800z"/></g>
</g>
<g opacity="1">
<circle cx="77.1" cy="117.6" r="12.2" fill="none" stroke="#d8eadf" stroke-width="2.400" opacity=".32" filter="url(#b1)"/>
<circle cx="77.1" cy="117.6" r="11.2" fill="url(#gNodeB)" stroke="#cfe2d6" stroke-width="1" stroke-opacity=".85"/>
<circle cx="77.1" cy="117.6" r="8.9" fill="none" stroke="#e3efe2" stroke-width=".4" opacity=".6"/>
<use href="#ip" transform="translate(77.1,117.96288) scale(1.21)" fill="#eef0dc"/>
</g>
<g opacity="1">
<circle cx="155.5" cy="120.5" r="12.4" fill="none" stroke="#d8eadf" stroke-width="2.400" opacity=".32" filter="url(#b1)"/>
<circle cx="155.5" cy="120.5" r="11.4" fill="url(#gNodeD)" stroke="#cfe2d6" stroke-width="1" stroke-opacity=".85"/>
<circle cx="155.5" cy="120.5" r="9.1" fill="none" stroke="#e3efe2" stroke-width=".4" opacity=".6"/>
<use href="#ip" transform="translate(155.5,120.86936) scale(1.23)" fill="#eef0dc"/>
</g>
<g opacity="1">
<circle cx="208.3" cy="116.5" r="12.6" fill="none" stroke="#d8eadf" stroke-width="2.400" opacity=".32" filter="url(#b1)"/>
<circle cx="208.3" cy="116.5" r="11.6" fill="url(#gNodeD)" stroke="#cfe2d6" stroke-width="1" stroke-opacity=".85"/>
<circle cx="208.3" cy="116.5" r="9.3" fill="none" stroke="#e3efe2" stroke-width=".4" opacity=".6"/>
<g transform="translate(208.3,116.5) scale(1.25)" fill="#eef0dc" stroke="none"><rect x="-4.500" y="-3.800" width="9" height="7.600" rx=".6"/><rect x="-3.500" y="-2.800" width="7" height="5" fill="#3f5560"/><path d="M-3.500 2.200L-1 -.6L.8 1.200L2 .2L3.500 2.200z"/></g>
</g>
<g opacity="1">
<circle cx="111.1" cy="135.4" r="12.4" fill="none" stroke="#d8eadf" stroke-width="2.400" opacity=".32" filter="url(#b1)"/>
<circle cx="111.1" cy="135.4" r="11.4" fill="url(#gNode)" stroke="#cfe2d6" stroke-width="1" stroke-opacity=".85"/>
<circle cx="111.1" cy="135.4" r="9.1" fill="none" stroke="#e3efe2" stroke-width=".4" opacity=".6"/>
<g transform="translate(111.1,135.4) scale(1.23)" fill="#eef0dc" stroke="none"><rect x="-3.800" y="-3.200" width="7.600" height="5" rx=".5"/><rect x="-4.800" y="2.300" width="9.600" height="1.200" rx=".4"/><rect x="-2.800" y="-2.300" width="5.600" height="3.200" fill="#5f8f8b"/></g>
</g>
<g opacity="1">
<circle cx="258.9" cy="144.5" r="14.0" fill="none" stroke="#d8eadf" stroke-width="2.400" opacity=".32" filter="url(#b1)"/>
<circle cx="258.9" cy="144.5" r="13.0" fill="url(#gNodeD)" stroke="#cfe2d6" stroke-width="1" stroke-opacity=".85"/>
<circle cx="258.9" cy="144.5" r="10.7" fill="none" stroke="#e3efe2" stroke-width=".4" opacity=".6"/>
<use href="#ip" transform="translate(258.9,144.9212) scale(1.40)" fill="#eef0dc"/>
</g>
<g opacity="1">
<circle cx="185.6" cy="152.1" r="12.2" fill="none" stroke="#d8eadf" stroke-width="2.400" opacity=".32" filter="url(#b1)"/>
<circle cx="185.6" cy="152.1" r="11.2" fill="url(#gNodeD)" stroke="#cfe2d6" stroke-width="1" stroke-opacity=".85"/>
<circle cx="185.6" cy="152.1" r="8.9" fill="none" stroke="#e3efe2" stroke-width=".4" opacity=".6"/>
<use href="#ip" transform="translate(185.6,152.46287999999998) scale(1.21)" fill="#eef0dc"/>
</g>
<g font-family="Liberation Mono, monospace" font-size="8.500" fill="#e2703c" filter="url(#b03)">
<text x="274.8" y="74.6" fill="#e2703c" opacity="1">0</text>
<text x="282.1" y="76.9" fill="#e2703c" opacity="1">0</text>
<text x="289.7" y="79.2" fill="#e2703c" opacity="0.9">1</text>
<text x="292.0" y="72.5" fill="#e2703c" opacity="0.9">1</text>
<text x="284.4" y="91.4" fill="#e2703c" opacity="1">0</text>
<text x="273.6" y="94.1" fill="#d9c7a0" opacity="0.75">0</text>
<text x="294.2" y="99.8" fill="#e2703c" opacity="1">0</text>
<text x="304.6" y="103.3" fill="#e2703c" opacity="1">0</text>
<text x="284.0" y="104.4" fill="#e2703c" opacity="0.9">1</text>
<text x="292.0" y="109.0" fill="#e2703c" opacity="0.9">5</text>
<text x="265.2" y="118.2" fill="#e2703c" opacity="1">0</text>
<text x="274.8" y="121.6" fill="#e2703c" opacity="1">0</text>
<text x="281.0" y="121.6" fill="#e2703c" opacity="1">1</text>
<text x="302.2" y="83.8" fill="#e2703c" opacity="0.9">1</text>
<text x="286.5" y="44.9" fill="#e2703c" opacity="0.45">1</text>
<text x="295.5" y="42.9" fill="#e2703c" opacity="0.4">0</text>
<text x="278.5" y="56.9" fill="#e2703c" opacity="0.4">0</text>
<text x="300.5" y="58.9" fill="#e2703c" opacity="0.45">1</text>
<text x="267.5" y="62.9" fill="#e2703c" opacity="0.35">1</text>
<text x="259.5" y="102.9" fill="#e2703c" opacity="0.4">1</text>
<text x="297.5" y="128.9" fill="#e2703c" opacity="0.45">0</text>
<text x="288.5" y="136.9" fill="#e2703c" opacity="0.4">1</text>
<text x="303.5" y="120.9" fill="#e2703c" opacity="0.5">1</text>
<text x="269.5" y="132.9" fill="#e2703c" opacity="0.35">0</text>
<text x="255.5" y="80.9" fill="#e2703c" opacity="0.3">1</text>
<text x="305.5" y="68.9" fill="#e2703c" opacity="0.4">0</text>
</g>
<g fill="none" stroke="#e08a50" stroke-width=".7" opacity=".8">
<rect x="63.7" y="93" width="2.600" height="2.200" rx=".5"/>
<rect x="60.7" y="101" width="2.600" height="2.200" rx=".5"/>
<rect x="79.7" y="107" width="2.600" height="2.200" rx=".5"/>
<rect x="50.7" y="117" width="2.600" height="2.200" rx=".5"/>
<rect x="78.7" y="141" width="2.600" height="2.200" rx=".5"/>
<rect x="32.7" y="71" width="2.600" height="2.200" rx=".5"/>
<rect x="38.7" y="65" width="2.600" height="2.200" rx=".5"/>
</g>
</g></svg>
</div></div>
</body></html>
